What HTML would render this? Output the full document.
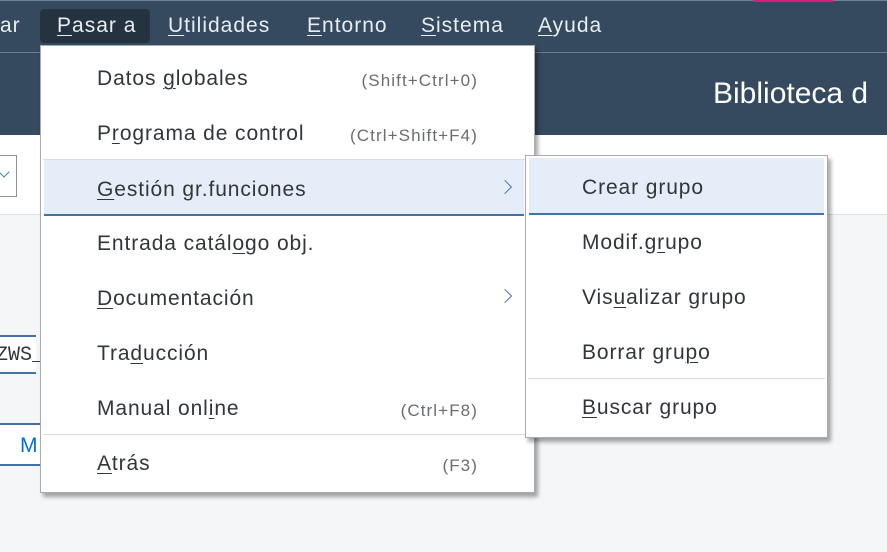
<!DOCTYPE html>
<html><head><meta charset="utf-8"><style>
*{margin:0;padding:0;box-sizing:border-box}
body{width:887px;height:552px;overflow:hidden;background:#f5f6f7;position:relative;font-family:"Liberation Sans",sans-serif}
.abs{position:absolute}
.bar{left:0;top:0;width:887px;height:53px;background:#354a5f;border-top:1px solid #6f8194;border-bottom:1px solid #6a7d91}
.mi{position:absolute;top:14px;color:#e8edf2;font-size:21px;letter-spacing:1px}
.u{text-decoration:underline;text-underline-offset:3px;text-decoration-thickness:1px}
.menu{background:#fff;border:1px solid #a8acb0;box-shadow:3px 4px 4px rgba(0,0,0,.35)}
.it{position:absolute;left:0;right:0;height:55px;font-size:21px;color:#32363a;letter-spacing:.9px}
.it .t{position:absolute;top:16px;white-space:nowrap}
.it .s{position:absolute;top:20px;right:56px;font-size:17px;color:#6a6d70;letter-spacing:1.1px}
.hl{background:#e5eef8;border-bottom:2px solid #3f72a8}
.sep{position:absolute;left:2px;right:2px;height:1px;background:#dcdcdc}
.chev{position:absolute;right:24px;top:20px;width:10px;height:10px;border-right:1.5px solid #427cc2;border-top:1.5px solid #427cc2;transform:rotate(45deg)}
</style></head><body>
<div class="abs bar"></div>
<div class="abs" style="left:753px;top:0;width:80px;height:2px;background:#d0217c"></div>
<div class="abs" style="left:40px;top:9px;width:110px;height:34px;background:#25323f;border-radius:4px"></div>
<div class="mi" style="left:0">ar</div>
<div class="mi" style="left:57px"><span class="u">P</span>asar a</div>
<div class="mi" style="left:168px"><span class="u">U</span>tilidades</div>
<div class="mi" style="left:307px"><span class="u">E</span>ntorno</div>
<div class="mi" style="left:421px"><span class="u">S</span>istema</div>
<div class="mi" style="left:538px"><span class="u">A</span>yuda</div>
<div class="abs" style="left:0;top:53px;width:887px;height:82px;background:#354a5f"></div>
<div class="abs" style="left:713px;top:77px;color:#fff;font-size:30px">Biblioteca d</div>
<div class="abs" style="left:0;top:135px;width:887px;height:80px;background:#fff;border-bottom:1px solid #e0e0e0"></div>
<div class="abs" style="left:-3px;top:155px;width:20px;height:42px;border:1px solid #8c9196;background:#fff"></div>
<div class="abs" style="left:0;top:168px;width:8px;height:8px;border-right:1.5px solid #427cc2;border-bottom:1.5px solid #427cc2;transform:rotate(45deg)"></div>
<div class="abs" style="left:0;top:335px;width:40px;height:39px;background:#fff;border-top:2px solid #3f72a8;border-bottom:2px solid #3f72a8;font-family:'Liberation Mono',monospace;font-size:20px;color:#32363a;padding-top:7px;margin-left:-4px">ZWS_</div>
<div class="abs" style="left:0;top:423px;width:40px;height:43px;background:#fff;border-top:2px solid #3f72a8;border-bottom:2px solid #3f72a8;color:#0a6ed1;font-size:21px;padding:9px 0 0 20px">M</div>

<div class="abs menu" style="left:40px;top:45px;width:495px;height:448px">
 <div class="it" style="top:5px"><span class="t" style="left:56px">Datos <span class="u">g</span>lobales</span><span class="s">(Shift+Ctrl+0)</span></div>
 <div class="it" style="top:60px"><span class="t" style="left:56px">P<span class="u">r</span>ograma de control</span><span class="s">(Ctrl+Shift+F4)</span></div>
 <div class="sep" style="top:113px"></div>
 <div class="it hl" style="top:114px;left:3px;right:10px;height:56px"><span class="t" style="left:53px;top:18px"><span class="u">G</span>estión gr.funciones</span><span class="chev" style="right:14px;top:22px"></span></div>
 <div class="it" style="top:170px"><span class="t" style="left:56px">Entrada catál<span class="u">o</span>go obj.</span></div>
 <div class="it" style="top:225px"><span class="t" style="left:56px"><span class="u">D</span>ocumentación</span><span class="chev"></span></div>
 <div class="it" style="top:280px"><span class="t" style="left:56px">Tra<span class="u">d</span>ucción</span></div>
 <div class="it" style="top:335px"><span class="t" style="left:56px">Manual onl<span class="u">i</span>ne</span><span class="s">(Ctrl+F8)</span></div>
 <div class="sep" style="top:388px"></div>
 <div class="it" style="top:390px"><span class="t" style="left:56px"><span class="u">A</span>trás</span><span class="s">(F3)</span></div>
</div>

<div class="abs menu" style="left:525px;top:155px;width:303px;height:283px">
 <div class="it hl" style="top:2px;left:3px;right:3px;height:57px"><span class="t" style="left:53px;top:18px">Crear grupo</span></div>
 <div class="it" style="top:59px"><span class="t" style="left:56px">Modif.g<span class="u">r</span>upo</span></div>
 <div class="it" style="top:114px"><span class="t" style="left:56px">Vis<span class="u">u</span>alizar grupo</span></div>
 <div class="it" style="top:169px"><span class="t" style="left:56px">Borrar gru<span class="u">p</span>o</span></div>
 <div class="sep" style="top:222px"></div>
 <div class="it" style="top:224px"><span class="t" style="left:56px"><span class="u">B</span>uscar grupo</span></div>
</div>
</body></html>
